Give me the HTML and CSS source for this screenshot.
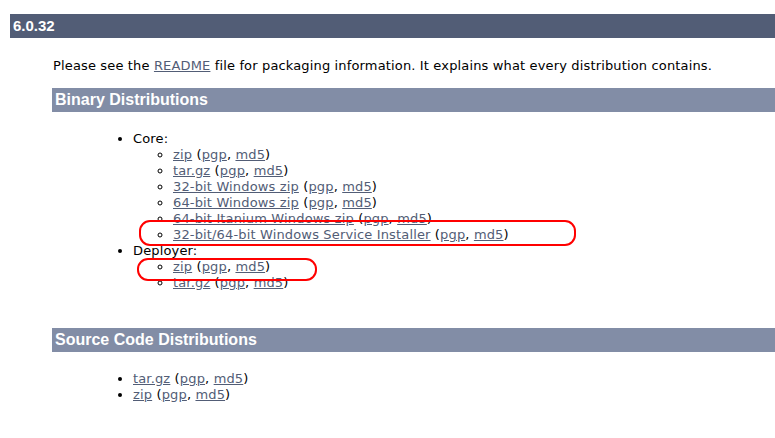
FILE: index.html
```html
<!DOCTYPE html>
<html lang="en">

<head>
    <meta charset="UTF-8">
    <title>Tomcat 6 Downloads</title>
    <link rel="stylesheet" href="styles.css">
</head>

<body>
    <!-- release block -->
    <h3 class="release">6.0.32</h3>
    <div class="release-body">
        <p class="intro">Please see the <a href="#">README</a> file for packaging information. It explains what every distribution contains.</p>

        <h4 class="dist">Binary Distributions</h4>
        <ul class="dist-list">
            <li>Core:
                <ul>
                    <li><a href="#">zip</a> (<a href="#">pgp</a>, <a href="#">md5</a>)</li>
                    <li><a href="#">tar.gz</a> (<a href="#">pgp</a>, <a href="#">md5</a>)</li>
                    <li><a href="#">32-bit Windows zip</a> (<a href="#">pgp</a>, <a href="#">md5</a>)</li>
                    <li><a href="#">64-bit Windows zip</a> (<a href="#">pgp</a>, <a href="#">md5</a>)</li>
                    <li><a href="#">64-bit Itanium Windows zip</a> (<a href="#">pgp</a>, <a href="#">md5</a>)</li>
                    <li><a href="#">32-bit/64-bit Windows Service Installer</a> (<a href="#">pgp</a>, <a href="#">md5</a>)</li>
                </ul>
            </li>
            <li>Deployer:
                <ul>
                    <li><a href="#">zip</a> (<a href="#">pgp</a>, <a href="#">md5</a>)</li>
                    <li><a href="#">tar.gz</a> (<a href="#">pgp</a>, <a href="#">md5</a>)</li>
                </ul>
            </li>
        </ul>

        <h4 class="dist source">Source Code Distributions</h4>
        <ul class="dist-list">
            <li><a href="#">tar.gz</a> (<a href="#">pgp</a>, <a href="#">md5</a>)</li>
            <li><a href="#">zip</a> (<a href="#">pgp</a>, <a href="#">md5</a>)</li>
        </ul>
    </div>
    <!-- /release block -->

    <!-- red marks drawn over the page -->
    <div class="mark mark-installer"></div>
    <div class="mark mark-deployer"></div>
</body>

</html>
```

FILE: styles.css
```css
* {
    margin: 0;
    padding: 0;
    box-sizing: border-box;
}

body {
    position: relative;
    background: white;
    color: black;
    font-family: "DejaVu Sans", "Noto Sans CJK JP", sans-serif;
    font-size: 13px;
    line-height: 16px;
    letter-spacing: 0.15px;
}

a {
    color: #525d76;
    text-decoration: underline;
}

/*release header*/
.release {
    margin: 14px 0 0 10px;
    height: 24px;
    padding-left: 3px;
    background-color: #525d76;
    color: white;
    font-family: "Liberation Sans", Arial, sans-serif;
    font-size: 15px;
    font-weight: bold;
    line-height: 24px;
    letter-spacing: 0;
}

.release-body {
    margin-left: 52px;
}

.intro {
    margin-top: 20px;
    padding-left: 1px;
}

.dist {
    margin-top: 14px;
    height: 24px;
    padding-left: 3px;
    background-color: #828da6;
    color: white;
    font-family: "Liberation Sans", Arial, sans-serif;
    font-size: 16px;
    font-weight: bold;
    line-height: 24px;
    letter-spacing: 0;
}

.dist.source {
    margin-top: 37px;
}

.dist-list {
    margin-top: 19px;
    padding-left: 81px;
}

.dist-list ul {
    padding-left: 40px;
    list-style-type: circle;
}
/*release end*/

/*annotation marks*/
.mark {
    position: absolute;
    border: 2px solid #ff0000;
    border-radius: 11px;
}

.mark-installer {
    left: 139px;
    top: 220px;
    width: 437px;
    height: 26px;
}

.mark-deployer {
    left: 137px;
    top: 258px;
    width: 180px;
    height: 23px;
}
```
